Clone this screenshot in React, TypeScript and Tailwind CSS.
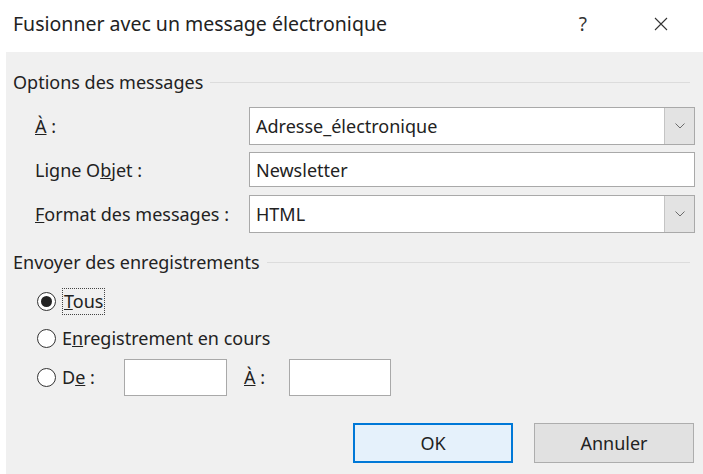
import { useState } from "react";

const font = { fontFamily: '"Segoe UI", "Noto Sans", "Open Sans", sans-serif' };

function Chevron() {
  return (
    <svg width="10" height="6" viewBox="0 0 10 6" fill="none" stroke="#6b6b6b" strokeWidth="1">
      <path d="M0.5 0.5 L5 5 L9.5 0.5" />
    </svg>
  );
}

function Select({ value }: { value: string }) {
  return (
    <div className="flex h-[38px] w-[446px] border border-[#a9a9a9] bg-white">
      <div className="flex flex-1 items-center pl-[6px]">{value}</div>
      <div className="flex w-[30px] items-center justify-center border-l border-[#c4c4c4] bg-[#e3e3e3]">
        <Chevron />
      </div>
    </div>
  );
}

function Radio({ checked }: { checked?: boolean }) {
  return (
    <span className="flex h-[19px] w-[19px] shrink-0 items-center justify-center rounded-full border-[1.5px] border-[#333] bg-white">
      {checked && <span className="h-[11px] w-[11px] rounded-full bg-[#222]" />}
    </span>
  );
}

function Legend({ label }: { label: string }) {
  return (
    <div className="flex h-[24px] items-center gap-[7px] pr-[5px]">
      <span>{label}</span>
      <span className="h-px flex-1 bg-[#dcdcdc]" />
    </div>
  );
}

export default function App() {
  const [mode, setMode] = useState("tous");

  return (
    <div
      className="h-[474px] w-[703px] overflow-hidden bg-white text-[18px] leading-[24px] text-[#222]"
      style={font}
    >
      {/* title bar */}
      <div className="flex h-[52px] items-center pb-[4px] pl-[13px]">
        <span className="flex-1 text-[19.5px]">Fusionner avec un message électronique</span>
        <span className="mr-[67px] text-[19px] text-[#333]">?</span>
        <svg width="14" height="14" viewBox="0 0 14 14" stroke="#333" strokeWidth="1.1" className="mr-[35px]">
          <path d="M1 1 L13 13 M13 1 L1 13" />
        </svg>
      </div>

      <div className="ml-[6px] h-[422px] bg-[#f0f0f0] pl-[7px] pr-[8px]">
        <div className="pt-[18px]">
          <Legend label="Options des messages" />
        </div>

        <div className="mt-[13px] flex flex-col gap-[7px] pl-[22px]">
          <div className="flex items-center">
            <span className="w-[214px]">
              <u>À</u> :
            </span>
            <Select value="Adresse_électronique" />
          </div>
          <div className="flex items-center">
            <span className="w-[214px]">
              Ligne O<u>b</u>jet :
            </span>
            <div className="flex h-[35px] w-[446px] items-center border border-[#a9a9a9] bg-white pl-[6px]">
              Newsletter
            </div>
          </div>
          <div className="mt-px flex items-center">
            <span className="w-[214px]">
              <u>F</u>ormat des messages :
            </span>
            <Select value="HTML" />
          </div>
        </div>

        <div className="mt-[17px]">
          <Legend label="Envoyer des enregistrements" />
        </div>

        <div className="mt-[10px] flex flex-col pl-[24px]">
          <label className="flex h-[34px] items-center gap-[6px]" onClick={() => setMode("tous")}>
            <Radio checked={mode === "tous"} />
            <span className="border border-dotted border-[#444] px-[1px] leading-[25px]">
              <u>T</u>ous
            </span>
          </label>
          <label className="flex h-[40px] items-center gap-[6px]" onClick={() => setMode("courant")}>
            <Radio checked={mode === "courant"} />
            <span>
              E<u>n</u>registrement en cours
            </span>
          </label>
          <div className="flex h-[38px] items-center">
            <label className="flex w-[87px] items-center gap-[6px]" onClick={() => setMode("plage")}>
              <Radio checked={mode === "plage"} />
              <span>
                D<u>e</u> :
              </span>
            </label>
            <div className="h-[37px] w-[103px] border border-[#a9a9a9] bg-white" />
            <span className="ml-[17px] w-[45px]">
              <u>À</u> :
            </span>
            <div className="h-[37px] w-[102px] border border-[#a9a9a9] bg-white" />
          </div>
        </div>

        <div className="mt-[27px] flex justify-end gap-[21px] pr-px">
          <button className="h-[40px] w-[160px] border-2 border-[#0078d7] bg-[#e5f1fb]">OK</button>
          <button className="h-[40px] w-[160px] border border-[#adadad] bg-[#e1e1e1]">Annuler</button>
        </div>
      </div>
    </div>
  );
}
